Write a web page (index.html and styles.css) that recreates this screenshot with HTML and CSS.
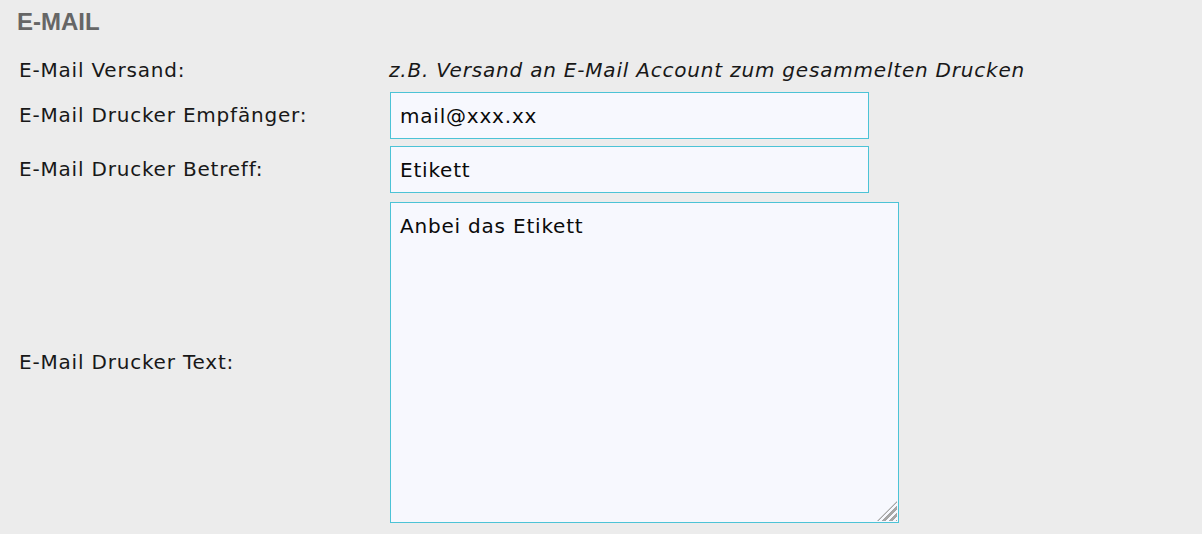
FILE: index.html
```html
<!DOCTYPE html>
<html lang="de">
<head>
<meta charset="utf-8">
<title>E-Mail</title>
<link rel="stylesheet" href="styles.css">
</head>
<body>
<section class="panel">
  <h2 class="panel-title">E-MAIL</h2>
  <div class="form">
    <div class="row row-info">
      <span class="label">E-Mail Versand:</span>
      <span class="hint">z.B. Versand an E-Mail Account zum gesammelten Drucken</span>
    </div>
    <div class="row">
      <label class="label" for="to">E-Mail Drucker Empfänger:</label>
      <input class="field" id="to" type="text" value="mail@xxx.xx">
    </div>
    <div class="row">
      <label class="label" for="subj">E-Mail Drucker Betreff:</label>
      <input class="field" id="subj" type="text" value="Etikett">
    </div>
    <div class="row row-text">
      <label class="label" for="body">E-Mail Drucker Text:</label>
      <div class="area-wrap">
        <textarea class="area" id="body">Anbei das Etikett</textarea>
      </div>
    </div>
  </div>
</section>
</body>
</html>
```

FILE: styles.css
```css
html, body {
  margin: 0;
  padding: 0;
  background: #ececec;
}
body {
  font-family: "DejaVu Sans", Verdana, sans-serif;
  font-size: 20px;
  letter-spacing: 0.8px;
  color: #181818;
}
.panel {
  padding: 8px 0 0 19px;
}
.panel-title {
  margin: 0 0 19px -2px;
  font-family: "Liberation Sans", Arial, sans-serif;
  font-weight: bold;
  font-size: 24px;
  line-height: 28px;
  letter-spacing: 0;
  color: #666;
}
.form {
  display: flex;
  flex-direction: column;
  gap: 7px;
}
.row {
  display: flex;
  align-items: center;
}
.row-info {
  height: 30px;
}
.row-text {
  margin-top: 2px;
}
.label {
  width: 371px;
  flex: none;
  line-height: 23px;
}
.hint {
  font-style: italic;
  margin-left: -1px;
  line-height: 23px;
}
.field {
  box-sizing: border-box;
  width: 479px;
  height: 47px;
  margin: 0;
  padding: 0 9px;
  border: 1px solid #4cc3d6;
  border-radius: 0;
  background: #f7f8fe;
  font-family: "DejaVu Sans", Verdana, sans-serif;
  font-size: 20px;
  letter-spacing: 0.8px;
  color: #0a0a0a;
  outline: none;
}
.area-wrap {
  position: relative;
  display: flex;
}
.area-wrap::after {
  content: "";
  position: absolute;
  right: 2px;
  bottom: 2px;
  width: 20px;
  height: 20px;
  background: repeating-linear-gradient(135deg, transparent 0 2.5px, #a6a6a6 2.5px 5px);
  clip-path: polygon(100% 0, 100% 100%, 0 100%);
  pointer-events: none;
}
.area {
  box-sizing: border-box;
  width: 509px;
  height: 321px;
  margin: 0;
  padding: 12px 9px;
  border: 1px solid #4cc3d6;
  border-radius: 0;
  background: #f7f8fe;
  font-family: "DejaVu Sans", Verdana, sans-serif;
  font-size: 20px;
  line-height: 23px;
  letter-spacing: 0.8px;
  color: #0a0a0a;
  outline: none;
  resize: none;
}
```
